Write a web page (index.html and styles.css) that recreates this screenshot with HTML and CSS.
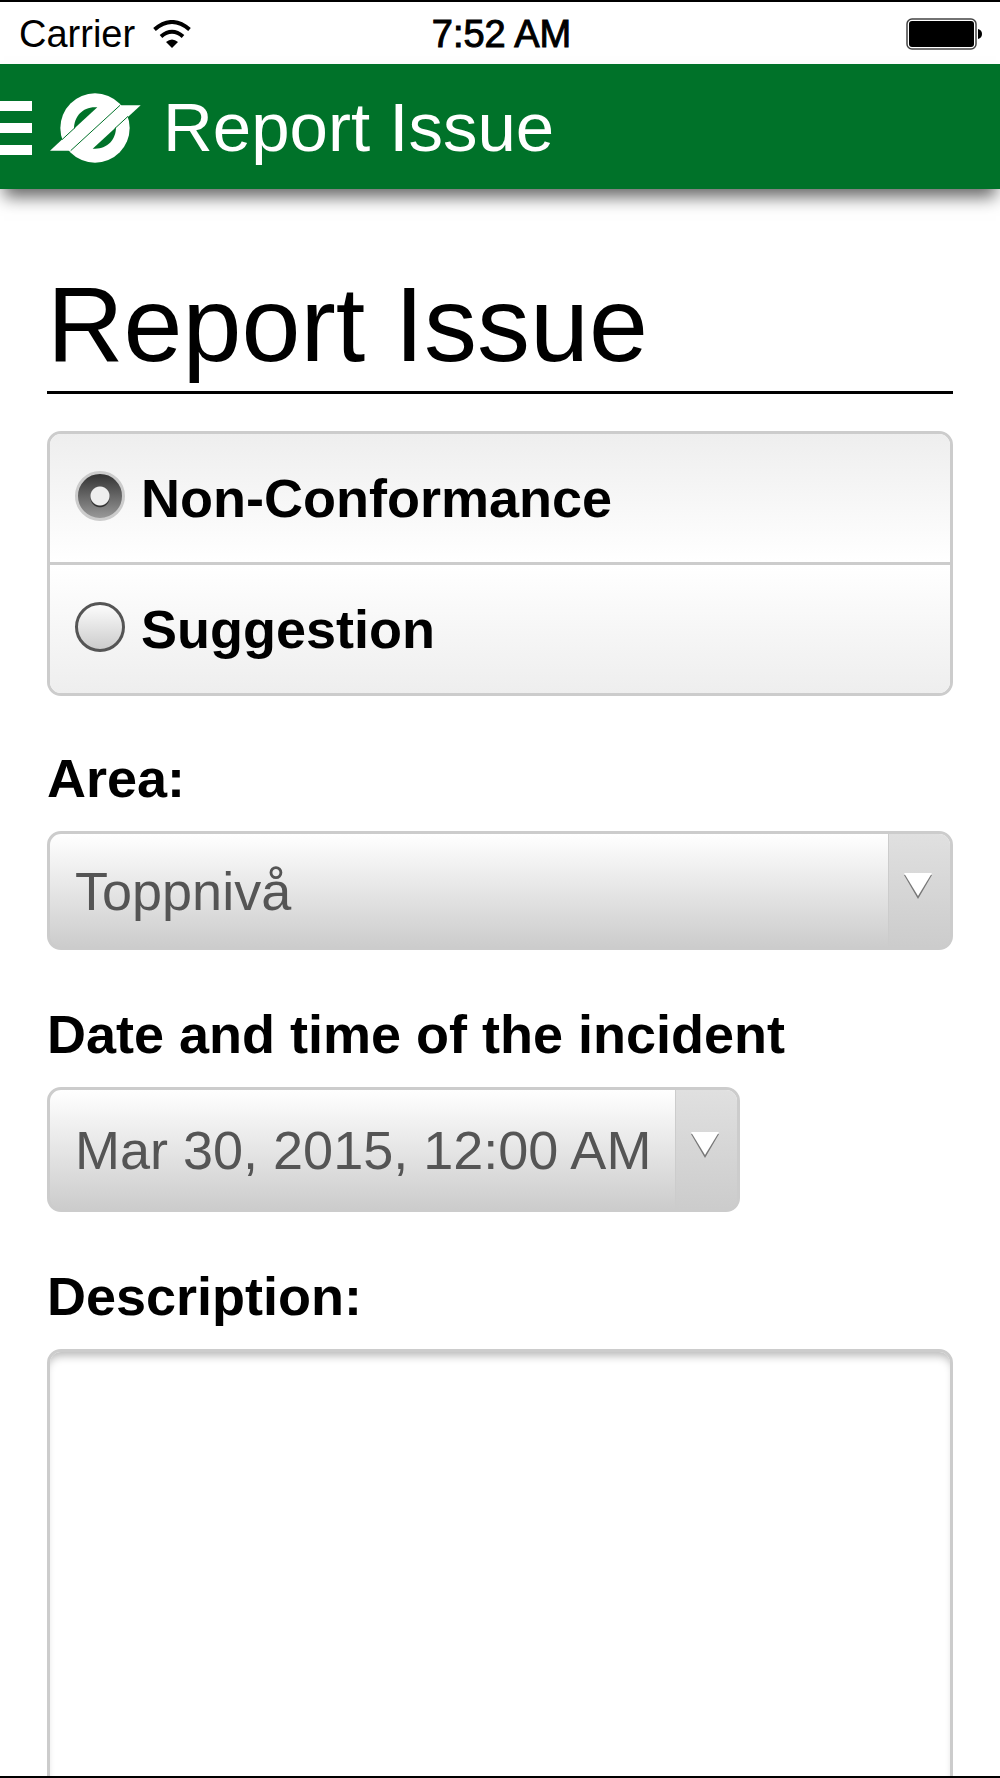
FILE: index.html
```html
<!DOCTYPE html>
<html lang="en">
<head>
  <meta charset="UTF-8" />
  <meta name="viewport" content="width=device-width, initial-scale=1.0"/>
  <title>Report Issue</title>
  <link rel="stylesheet" href="styles.css">
</head>
<body>
  <div class="status-bar">
    <div class="carrier">
      <span>Carrier</span>
      <svg class="wifi" viewBox="0 0 38 28" aria-hidden="true">
        <path d="M1.500 9.500 Q19 -5.500 36.500 9.500" fill="none" stroke="#000" stroke-width="4"/>
        <path d="M8 16.500 Q19 7 30 16.500" fill="none" stroke="#000" stroke-width="4"/>
        <path d="M13 22 Q19 17 25 22 L19 28 Z"/>
      </svg>
    </div>
    <div class="time">7:52 AM</div>
    <svg class="battery" viewBox="0 0 78 32" aria-hidden="true">
      <rect x="1" y="1" width="69" height="30" rx="5" fill="#fff" stroke="#444" stroke-width="1.500"/>
      <rect x="3" y="3" width="65" height="26" rx="3"/>
      <path d="M72 11 Q76 12 76 16 Q76 20 72 21 Z"/>
    </svg>
  </div>
  <header>
    <button type="button" class="menu-btn" aria-label="Menu">
      <span></span>
      <span></span>
      <span></span>
    </button>
    <svg class="logo" viewBox="150 275 273 210" aria-hidden="true">
      <g fill="#fff">
        <circle cx="285" cy="380" r="104"/>
        <path d="M150 448 H212 L360 312 L296 312 Z"/>
        <path d="M212 448 L360 312 H422 L274 448 Z"/>
      </g>
      <g fill="#007229">
        <path d="M222 382 C222 344 250 314 292 318 Z"/>
        <path d="M348 378 C348 416 320 446 278 442 Z"/>
      </g>
      <g stroke="#007229" stroke-width="3">
        <path d="M186 415 L226 378"/>
        <path d="M212 448 L360 312"/>
        <path d="M344 382 L384 345"/>
      </g>
    </svg>
    <div class="header-title">Report Issue</div>
  </header>
  <main>
    <h1>Report Issue</h1>
    <form>
      <div class="radio-group" role="radiogroup" aria-label="Issue type">
        <label class="radio-row">
          <input type="radio" name="issueType" value="nonconformance" checked />
          <span>Non-Conformance</span>
        </label>
        <label class="radio-row">
          <input type="radio" name="issueType" value="suggestion" />
          <span>Suggestion</span>
        </label>
      </div>
      <div class="field">
        <label for="area">Area:</label>
        <div class="select-box">
          <select id="area" name="area">
            <option>Toppnivå</option>
          </select>
          <span class="select-arrow">
            <svg viewBox="0 0 30 28"><path d="M1 3 L15 27 L29 3" fill="#777"/><path d="M1 1 H29 L15 24 Z" fill="#fff"/></svg>
          </span>
        </div>
      </div>
      <div class="field">
        <label for="date">Date and time of the incident</label>
        <div class="select-box date-box">
          <select id="date" name="date">
            <option>Mar 30, 2015, 12:00 AM</option>
          </select>
          <span class="select-arrow">
            <svg viewBox="0 0 30 28"><path d="M1 3 L15 27 L29 3" fill="#777"/><path d="M1 1 H29 L15 24 Z" fill="#fff"/></svg>
          </span>
        </div>
      </div>
      <div class="field">
        <label for="description">Description:</label>
        <textarea id="description" name="description"></textarea>
      </div>
    </form>
  </main>
</body>
</html>
```
FILE: styles.css
```css
* {
  margin: 0;
  padding: 0;
  box-sizing: border-box;
}
body {
  display: flex;
  flex-direction: column;
  height: 100vh;
  overflow: hidden;
  border-top: 2px solid #000;
  border-bottom: 2px solid #000;
  font-family: "Liberation Sans", Arial, Helvetica, sans-serif;
  background-color: #fff;
  color: #000;
}
.status-bar {
  display: grid;
  grid-template-columns: 1fr auto 1fr;
  align-items: center;
  flex-shrink: 0;
  height: 62px;
  padding: 2px 16px 0 19px;
  font-size: 38px;
}
.carrier {
  display: flex;
  align-items: center;
  gap: 18px;
}
.wifi {
  width: 38px;
  height: 28px;
}
.time {
  -webkit-text-stroke: 1px #000;
}
.battery {
  justify-self: end;
  width: 78px;
  height: 32px;
}
header {
  display: flex;
  align-items: center;
  flex-shrink: 0;
  height: 125px;
  padding-top: 2px;
  background-color: #007229;
  color: #fff;
  box-shadow: 0 12px 16px -4px rgba(0, 0, 0, 0.6);
}
.menu-btn {
  display: flex;
  flex-direction: column;
  gap: 12px;
  width: 32px;
  margin-right: 18px;
  border: none;
  background: none;
  cursor: pointer;
}
.menu-btn span {
  width: 100%;
  height: 10px;
  background-color: #fff;
}
.logo {
  width: 91px;
  height: 70px;
  margin-right: 22px;
}
.header-title {
  font-size: 69px;
}
main {
  flex: 1;
  min-height: 0;
  padding: 75px 47px 0;
}
h1 {
  padding-bottom: 7px;
  margin-bottom: 37px;
  border-bottom: 3px solid #000;
  font-size: 106px;
  font-weight: normal;
  line-height: 120px;
}
.radio-group {
  margin-bottom: 50px;
  border: 3px solid #ccc;
  border-radius: 14px;
  overflow: hidden;
}
.radio-row {
  display: flex;
  align-items: center;
  gap: 16px;
  height: 128px;
  padding: 0 25px;
  font-size: 54px;
  font-weight: bold;
  background: linear-gradient(#eee, #fff);
}
.radio-row + .radio-row {
  height: 131px;
  border-top: 3px solid #ccc;
  background: linear-gradient(#fff, #eee);
}
.radio-row input {
  appearance: none;
  width: 50px;
  height: 50px;
  margin-bottom: 5px;
  border: 3px solid #555;
  border-radius: 50%;
  background: linear-gradient(#fcfcfc, #ccc);
}
.radio-row input:checked {
  border-color: #ccc;
  background:
    radial-gradient(circle at 50% 50%, #eee 9px, transparent 10px),
    radial-gradient(circle at 50% 54%, #333 9px, transparent 10px),
    linear-gradient(#333, #999);
}
.field {
  margin-bottom: 52px;
}
.field label {
  display: block;
  margin-bottom: 21px;
  font-size: 54px;
  font-weight: bold;
  line-height: 64px;
}
.select-box {
  position: relative;
  height: 119px;
}
.date-box {
  width: 693px;
  max-width: 100%;
  height: 125px;
}
select {
  appearance: none;
  width: 100%;
  height: 100%;
  padding: 0 66px 0 25px;
  border: 3px solid #ccc;
  border-radius: 14px;
  background: linear-gradient(#fff, #ccc);
  font-family: inherit;
  font-size: 54px;
  color: #555;
}
.select-arrow {
  position: absolute;
  top: 3px;
  right: 3px;
  bottom: 3px;
  display: flex;
  align-items: center;
  justify-content: center;
  width: 62px;
  padding: 0 4px 10px 0;
  border-left: 1px solid #ccc;
  border-radius: 0 11px 11px 0;
  background: linear-gradient(#e0e0e0, #ccc);
  pointer-events: none;
}
.select-arrow svg {
  width: 30px;
  height: 28px;
}
textarea {
  display: block;
  width: 100%;
  height: 600px;
  padding: 20px 25px;
  border: 3px solid #ccc;
  border-radius: 14px;
  box-shadow: inset 0 8px 8px -4px #bbb;
  font-family: inherit;
  font-size: 54px;
  resize: none;
}
```
